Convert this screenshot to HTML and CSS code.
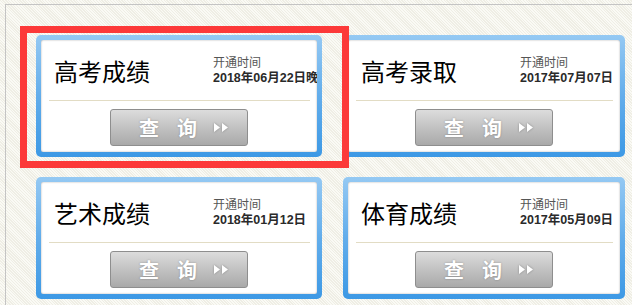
FILE: index.html
```html
<!DOCTYPE html>
<html lang="zh-CN">
<head>
<meta charset="utf-8">
<title>查询</title>
<link rel="stylesheet" href="styles.css">
</head>
<body>
<div class="page">
  <div class="grid">
    <div class="card">
      <div class="inner">
        <div class="head">
          <div class="title">高考成绩</div>
          <div class="time"><div class="label">开通时间</div><div class="date">2018年06月22日晚</div></div>
        </div>
        <div class="sep"></div>
        <div class="btnrow"><a class="btn"><span>查</span><span>询</span><svg class="arr" width="15" height="9" viewBox="0 0 15 9"><polygon points="0,0 6,4.5 0,9" fill="#fff"/><polygon points="8,0 14,4.5 8,9" fill="#fff"/></svg></a></div>
      </div>
    </div>
    <div class="card">
      <div class="inner">
        <div class="head">
          <div class="title">高考录取</div>
          <div class="time"><div class="label">开通时间</div><div class="date">2017年07月07日</div></div>
        </div>
        <div class="sep"></div>
        <div class="btnrow"><a class="btn"><span>查</span><span>询</span><svg class="arr" width="15" height="9" viewBox="0 0 15 9"><polygon points="0,0 6,4.5 0,9" fill="#fff"/><polygon points="8,0 14,4.5 8,9" fill="#fff"/></svg></a></div>
      </div>
    </div>
    <div class="card">
      <div class="inner">
        <div class="head">
          <div class="title">艺术成绩</div>
          <div class="time"><div class="label">开通时间</div><div class="date">2018年01月12日</div></div>
        </div>
        <div class="sep"></div>
        <div class="btnrow"><a class="btn"><span>查</span><span>询</span><svg class="arr" width="15" height="9" viewBox="0 0 15 9"><polygon points="0,0 6,4.5 0,9" fill="#fff"/><polygon points="8,0 14,4.5 8,9" fill="#fff"/></svg></a></div>
      </div>
    </div>
    <div class="card">
      <div class="inner">
        <div class="head">
          <div class="title">体育成绩</div>
          <div class="time"><div class="label">开通时间</div><div class="date">2017年05月09日</div></div>
        </div>
        <div class="sep"></div>
        <div class="btnrow"><a class="btn"><span>查</span><span>询</span><svg class="arr" width="15" height="9" viewBox="0 0 15 9"><polygon points="0,0 6,4.5 0,9" fill="#fff"/><polygon points="8,0 14,4.5 8,9" fill="#fff"/></svg></a></div>
      </div>
    </div>
  </div>
  <div class="highlight"></div>
</div>
</body>
</html>
```
FILE: styles.css
```css
html, body {
  margin: 0;
  padding: 0;
  height: 100%;
}
body {
  background: repeating-linear-gradient(45deg, #fafaf5 0 1px, #efeee5 1px 2px);
  font-family: "Liberation Sans", "Noto Sans CJK SC", sans-serif;
  overflow: hidden;
}
.page {
  position: relative;
  box-sizing: border-box;
  margin: 4px 0 0 5px;
  height: calc(100% - 4px);
  border-top: 1px solid #c4c4c4;
  border-left: 1px solid #c4c4c4;
  padding: 30px 0 0 30px;
}
.grid {
  display: grid;
  grid-template-columns: 286px 282px;
  column-gap: 21px;
  row-gap: 20px;
}
.card {
  height: 122px;
  box-sizing: border-box;
  padding: 5px;
  border-radius: 5px;
  background: linear-gradient(#95c9f3, #62adeb 50%, #3d99e5);
}
.inner {
  height: 100%;
  overflow: hidden;
  background: #fff;
  border-radius: 2px;
  box-shadow: inset 0 0 2px rgba(0, 0, 0, 0.35);
  display: flex;
  flex-direction: column;
}
.head {
  height: 58px;
  flex-shrink: 0;
  display: flex;
  align-items: center;
  padding: 2px 0 0 13px;
}
.title {
  width: 159px;
  flex-shrink: 0;
  font-family: "Noto Sans CJK SC", sans-serif;
  font-size: 24px;
  line-height: 28px;
  color: #000;
}
.time {
  flex-shrink: 0;
  display: flex;
  flex-direction: column;
  margin-top: -3px;
}
.label {
  font-family: "Noto Sans CJK SC", sans-serif;
  font-size: 12px;
  line-height: 16px;
  color: #555;
}
.date {
  font-size: 12.5px;
  line-height: 16px;
  font-weight: bold;
  color: #2a2a2a;
  white-space: nowrap;
}
.sep {
  height: 1px;
  flex-shrink: 0;
  background: #e2dcc4;
  margin: 0 7px 0 8px;
}
.btnrow {
  display: flex;
  justify-content: center;
  padding-top: 8px;
}
.btn {
  box-sizing: border-box;
  width: 138px;
  height: 37px;
  border: 1px solid #8e8e8e;
  border-radius: 3px;
  background: linear-gradient(#dcdcdc, #c2c2c2 50%, #a9a9a9);
  display: flex;
  align-items: center;
  padding-left: 28px;
  gap: 18px;
  color: #fff;
  font-family: "Noto Sans CJK SC", sans-serif;
  font-size: 20px;
  font-weight: bold;
  line-height: 24px;
  text-shadow: 0 0 2px rgba(0, 0, 0, 0.3);
}
.arr {
  margin-left: -1px;
  filter: drop-shadow(0 0 1px rgba(0, 0, 0, 0.3));
}
.highlight {
  position: absolute;
  left: 14px;
  top: 21px;
  width: 315px;
  height: 128px;
  border: 7px solid #fc3939;
}
```
